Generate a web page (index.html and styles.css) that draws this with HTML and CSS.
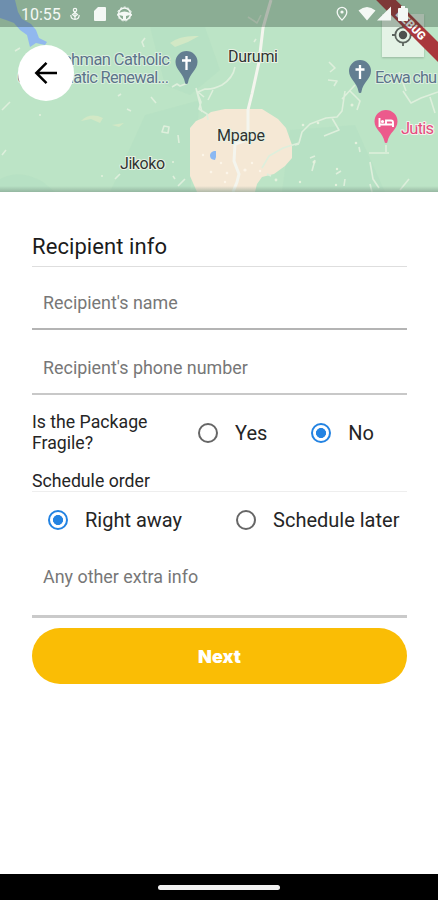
FILE: index.html
```html
<!DOCTYPE html>
<html lang="en">
<head>
<meta charset="utf-8">
<title>Recipient info</title>
<link rel="stylesheet" href="styles.css">
</head>
<body>
<main class="screen">
  <header class="map">
    <svg class="map-art" width="438" height="192" viewBox="0 0 438 192">
      <defs>
        <linearGradient id="edge" x1="0" y1="0" x2="0" y2="1"><stop offset="0" stop-color="#789384" stop-opacity="0"/><stop offset="1" stop-color="#789384" stop-opacity=".55"/></linearGradient>
      </defs>
      <rect width="438" height="192" fill="#bce4c6"/>
      <g fill="#b0dcc0" opacity=".35">
        <path d="M0 179Q20 168 43 182L55 192H0zM150 27L205 27 220 70 190 95 165 85zM145 115L200 100 190 192H110zM290 130L355 125 385 192H282z"/>
      </g>
      <path d="M0 0H15L18 12 22 19 31 24 36 30 39 38 47 42 45 45 36 43 30 47 27 35 20 30 14 23 6 20 0 18z" fill="#91b8ee"/>
      <path d="M190 128L196 121 203 118 211 112 225 109H262L278 119 286 128 292 145V158L285 166 274 174 262 177 257 184 255 192H197L190 176z" fill="#f5e8d5"/>
      <g fill="#d2e8c5">
        <path d="M170 43Q180 35 199 36L188 42 175 47zM81 121Q90 112 103 118L100 123 91 119zM112 125l12-2-5 4z"/>
      </g>
      <g fill="none" stroke="#deefdc" stroke-width="1.6" stroke-linejoin="round">
        <path d="M235 67Q233 78 222 85Q212 90 205 89L198 92 204 97M172 87l5-3 3 2 8-3M254 42l2-3M248 17l9 6 4-8M196 88l6 24M197 92l4 10-2 7 8 5 1 6M213 90l-5 10M345 91l-3 20-5 6-11 1-16 6-8 8-3 11-16 5-14 8-7 12M332 118l7 12-15 6M350 91l10 10-3 9M403 91l8 12 10-5 17-6M399 72l7 19M329 62l6 6-5 4M328 80l9 1-3 5M355 85l-13 14M370 184l2 8M370 162l3 17 6 9M386 145v7m-17 1h20M359 147l1 5M409 179l-9 11M310 158l5-2M315 160l-3 11M295 145l4-1M118 96l3-2M127 109l4 2M151 97l5 6M164 126l5 1-1 6-6-1zM178 135l1 8M115 179l5-5M2 155l4-5M15 51l5-3M145 38l-3 4 2 5M10 102l-8 8M173 176l2 3M178 186l7-7M267 174l4 2M336 174l5-3M345 179l-1 7M430 97l5 16"/>
      </g>
      <g fill="#e4f1dd">
        <circle cx="40" cy="115" r="1"/><circle cx="102" cy="176" r="1"/><circle cx="173" cy="162" r="1"/><circle cx="303" cy="125" r="1.3"/><circle cx="318" cy="123" r="1.3"/><circle cx="352" cy="105" r="1.5"/><circle cx="356" cy="143" r="1.3"/><circle cx="300" cy="182" r="1.2"/><circle cx="314" cy="162" r="1.5"/><circle cx="337" cy="169" r="1.2"/><circle cx="276" cy="180" r="1.4"/><circle cx="336" cy="185" r="1.2"/>
      </g>
      <g fill="#fcf5e9">
        <circle cx="211" cy="172" r="1.3"/><circle cx="221" cy="163" r="1.2"/><circle cx="245" cy="170" r="1.6"/><circle cx="227" cy="173" r="1.3"/><circle cx="252" cy="163" r="1.2"/><circle cx="260" cy="171" r="1.2"/><circle cx="203" cy="155" r="1.2"/><circle cx="225" cy="182" r="1.2"/>
      </g>
      <path d="M271 0Q266 17 263 28L259 62 252 94 248 110V130L244 141 235 144 234 161 239 174 237 182 233 192" fill="none" stroke="#f4f5ee" stroke-width="3"/>
      <path d="M214 151q-4 1-4 4.500 0 4 5 4.500l1-3V151z" fill="#8ab8f3"/>
      <g>
        <path d="M186.500 51a11 11 0 0 0-11 11c0 8 8 11 9.500 20.500a1.500 1.500 0 0 0 3 0C189.500 73 197.500 70 197.500 62a11 11 0 0 0-11-11z" fill="#637e91"/>
        <path d="M186.500 56v14M182 60.500h9" stroke="#fff" stroke-width="2.300" fill="none"/>
      </g>
      <g transform="translate(173.500 9)">
        <path d="M186.500 51a11 11 0 0 0-11 11c0 8 8 11 9.500 20.500a1.500 1.500 0 0 0 3 0C189.500 73 197.500 70 197.500 62a11 11 0 0 0-11-11z" fill="#637e91"/>
        <path d="M186.500 56v14M182 60.500h9" stroke="#fff" stroke-width="2.300" fill="none"/>
      </g>
      <g transform="translate(199.500 59)">
        <path d="M186.500 51a11.500 11.500 0 0 0-11.500 11.500c0 8 8.500 11 10 20a1.500 1.500 0 0 0 3 0C189.500 73.500 198 70.500 198 62.500a11.500 11.500 0 0 0-11.500-11.500z" fill="#ec5a8c"/>
        <path d="M180 59v9M180 65.500h14M193.500 68v-4.500q0-2-2-2h-5v3.500" stroke="#fff" stroke-width="1.900" fill="none"/><circle cx="183" cy="62.500" r="1.600" fill="#fff"/>
      </g>
      <g class="place">
        <text x="36" y="65" textLength="134">Watchman Catholic</text>
        <text x="17" y="83" textLength="152">Charismatic Renewal...</text>
        <text x="375" y="83" textLength="62">Ecwa chu</text>
        <text class="town" x="228" y="62" textLength="50">Durumi</text>
        <text class="town" x="217" y="141" textLength="48">Mpape</text>
        <text class="town" x="120" y="169" textLength="45">Jikoko</text>
        <text class="hotel" x="401" y="134" textLength="33">Jutis</text>
      </g>
      <path d="M0 186H438V192H0z" fill="url(#edge)"/>
    </svg>
    <div class="locate">
      <svg width="26" height="26" viewBox="0 0 26 26" fill="none" stroke="#5c655f" stroke-width="1.800"><circle cx="13" cy="13" r="7.700"/><circle cx="13" cy="13" r="4.200" fill="#4d504e" stroke="none"/><path d="M13 2v4M13 20v4M2 13h4M20 13h4"/></svg>
    </div>
    <div class="debug">DEBUG</div>
    <div class="status">
      <span class="clock">10:55</span>
      <svg class="status-icons" width="366" height="27" viewBox="72 0 366 27" fill="#f4f8f5">
        <g fill="none" stroke="#f4f8f5" stroke-width="1.200"><path d="M75 12v8M75 19.300q-4.200 0-4.200-4.300M75 19.300q4.200 0 4.200-4.300"/><circle cx="75" cy="10" r="1.700"/><path d="M75 12.500l2.500 2-2.500 2-2.500-2z"/></g>
        <path d="M98 7h7q1 0 1 1v12q0 1-1 1H95q-1 0-1-1v-9z"/>
        <circle cx="124.500" cy="14" r="6" fill="none" stroke="#f4f8f5" stroke-width="1.600"/><circle cx="124.500" cy="14" r="7" fill="none" stroke="#f4f8f5" stroke-width="1" stroke-dasharray="2 2"/><path d="M119 13q5.500-3 11 0v2l-4 1v4h-3v-4l-4-1z"/>
        <path d="M342 7.300a4.800 4.800 0 0 0-4.800 4.800c0 3.400 4.800 8 4.800 8s4.800-4.600 4.800-8a4.800 4.800 0 0 0-4.800-4.800z" fill="none" stroke="#f4f8f5" stroke-width="1.300"/><circle cx="342" cy="12" r="1.600"/>
        <path d="M358.500 10.500q8.500-7 17 0L367 20.500zM391 6.500v14H377z"/>
        <path d="M399 8h2V6h4v2h2q1 0 1 1v11q0 1-1 1h-8q-1 0-1-1V9q0-1 1-1z"/>
      </svg>
    </div>
    <button class="back" aria-label="Back">
      <svg width="24" height="24" viewBox="0 0 24 24" fill="none" stroke="#000" stroke-width="2.500"><path d="M23 12H2.500M12.500 1.800L2.300 12l10.200 10.200"/></svg>
    </button>
  </header>
  <form class="form">
    <h1 class="title">Recipient info</h1>
    <div class="field">Recipient's name</div>
    <div class="field phone">Recipient's phone number</div>
    <div class="fragile">
      <span class="question">Is the Package Fragile?</span>
      <span class="option"><i class="radio"></i>Yes</span>
      <span class="option no"><i class="radio on"></i>No</span>
    </div>
    <h2 class="subtitle">Schedule order</h2>
    <div class="schedule">
      <span class="option"><i class="radio on"></i>Right away</span>
      <span class="option later"><i class="radio"></i>Schedule later</span>
    </div>
    <div class="field extra">Any other extra info</div>
    <button class="next" type="button">Next</button>
  </form>
  <footer class="nav"><span class="handle"></span></footer>
</main>
</body>
</html>
```
FILE: styles.css
```css
* { box-sizing: border-box; }
body { margin: 0; font-family: Roboto, "Liberation Sans", sans-serif; background: #fff; }
.screen { display: flex; flex-direction: column; width: 438px; height: 900px; overflow: hidden; }
.map { position: relative; flex: none; height: 192px; overflow: hidden; }
.map-art { display: block; }
.place text { font-size: 16.5px; fill: #5c748a; stroke: #dcf0e0; stroke-width: 2px; paint-order: stroke; stroke-linejoin: round; }
.place .town { fill: #303432; font-size: 16px; stroke: #e9f2e4; }
.place .hotel { fill: #e34c7d; stroke: #f4f2ed; font-size: 16.5px; }
.status { position: absolute; inset: 0 0 auto; display: flex; height: 27px; isolation: isolate; }
.status::before { content: ""; position: absolute; inset: 0; background: rgba(40, 60, 45, .33); z-index: -1; }
.clock { width: 72px; padding-left: 21px; flex: none; color: #f4f8f5; font-size: 16px; line-height: 29px; }
.status-icons { flex: none; overflow: visible; }
.locate { position: absolute; left: 382px; top: 14px; width: 42px; height: 43px; padding: 8px; background: rgba(240, 247, 241, .76); box-shadow: 0 1px 2px rgba(0, 0, 0, .2); }
.locate svg { display: block; }
.debug { position: absolute; left: 352px; top: 19px; width: 120px; height: 14px; padding-right: 3px; background: #a9373c; color: #fff; text-align: center; font-size: 11.5px; line-height: 14px; font-weight: 900; transform: rotate(45deg); }
.back { position: absolute; left: 18px; top: 45px; width: 56px; height: 56px; padding: 0; border: 0; border-radius: 50%; background: #fff; display: flex; align-items: center; justify-content: center; }
.form { flex: 1; padding: 38px 31px 0 32px; color: #252525; }
.title { margin: 0; height: 37px; border-bottom: 1px solid #dedede; font-size: 22px; line-height: 33px; font-weight: 400; color: #1b1b1b; letter-spacing: .08px; }
.field { height: 63px; padding: 22px 11px 0; border-bottom: 2px solid #b4b4b4; color: #777; font-size: 17.9px; line-height: 28px; }
.phone { height: 65px; padding-top: 24px; border-bottom-color: #c8c8c8; }
.fragile { display: flex; align-items: center; height: 75px; }
.question { width: 166px; padding-right: 40px; font-size: 17.7px; line-height: 21px; }
.option { display: flex; align-items: center; font-size: 20px; line-height: 28px; white-space: nowrap; }
.radio { flex: none; width: 20px; height: 20px; margin-right: 17px; border: 2px solid #666; border-radius: 50%; }
.radio.on { border-color: #2383e2; background: radial-gradient(circle, #2383e2 0 4.700px, #fff 5.300px); }
.no { margin-left: 44px; }
.subtitle { margin: 0; height: 22px; border-bottom: 1px solid #eee; font-size: 17.7px; line-height: 22px; font-weight: 400; }
.schedule { display: flex; height: 56px; padding-left: 16px; align-items: center; }
.later { margin-left: 54px; }
.extra { height: 70px; padding-top: 15px; border-bottom: 3px solid #cacaca; }
.next { display: block; width: 100%; height: 56px; margin-top: 10px; border: 0; border-radius: 28px; background: #fabd05; color: #fff; font: 900 18px/56px Inter, sans-serif; }
.nav { flex: none; height: 26px; background: #000; display: flex; align-items: center; justify-content: center; }
.handle { width: 122px; height: 5px; border-radius: 3px; background: #f1f1f1; }
```
